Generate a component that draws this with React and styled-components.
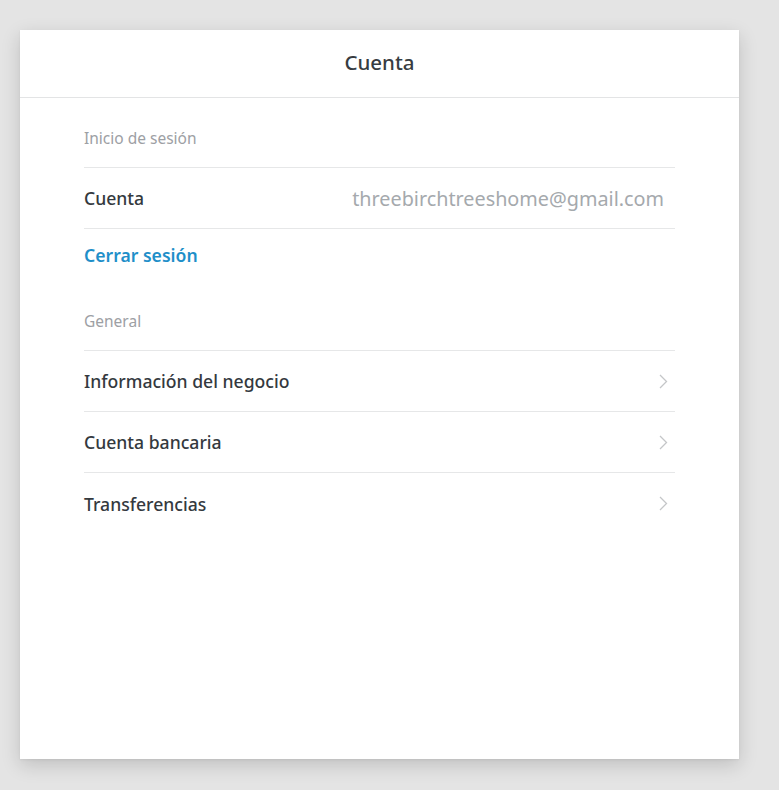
import React from 'react';
import styled, { createGlobalStyle } from 'styled-components';

const GlobalStyle = createGlobalStyle`
  html, body {
    margin: 0;
    padding: 0;
    background: #e4e4e4;
  }
  body {
    font-family: "Noto Sans", "Open Sans", sans-serif;
    -webkit-font-smoothing: antialiased;
  }
`;

const general = ['Información del negocio', 'Cuenta bancaria', 'Transferencias'];

const Chevron = () => (
  <svg width="9" height="15" viewBox="0 0 9 15" fill="none">
    <path d="M1 1l6.5 6.5L1 14" stroke="#c4c6c8" strokeWidth="1.3" />
  </svg>
);

const App = () => {
  return (
    <Page>
      <GlobalStyle />
      <Card>
        <Header>Cuenta</Header>
        <Body>
          <SectionTitle>Inicio de sesión</SectionTitle>
          <Row>
            <RowLabel>Cuenta</RowLabel>
            <RowValue>threebirchtreeshome@gmail.com</RowValue>
          </Row>
          <LinkRow>Cerrar sesión</LinkRow>

          <SectionTitle>General</SectionTitle>
          {general.map((item, i) => (
            <Row key={item} last={i === general.length - 1}>
              <RowLabel>{item}</RowLabel>
              <Chevron />
            </Row>
          ))}
        </Body>
      </Card>
    </Page>
  );
};

export default App;

const Page = styled.div`
  min-height: 790px;
  padding: 30px 40px 31px 20px;
  box-sizing: border-box;
`;

const Card = styled.div`
  width: 719px;
  height: 729px;
  background: #fff;
  box-shadow: 0 6px 18px rgba(0, 0, 0, 0.16), 0 1px 2px rgba(0, 0, 0, 0.06);
`;

const Header = styled.div`
  height: 68px;
  box-sizing: border-box;
  padding-bottom: 4px;
  display: flex;
  align-items: center;
  justify-content: center;
  border-bottom: 1px solid #e3e4e5;
  font-size: 20.5px;
  font-weight: 500;
  color: #373c41;
`;

const Body = styled.div`
  padding: 0 64px;
`;

const SectionTitle = styled.div`
  height: 70px;
  padding-top: 10px;
  box-sizing: border-box;
  display: flex;
  align-items: center;
  font-size: 15.5px;
  color: #9da0a4;
  border-bottom: 1px solid #e6e7e8;
`;

const Row = styled.div`
  height: 61px;
  box-sizing: border-box;
  display: flex;
  align-items: center;
  justify-content: space-between;
  padding-right: 7px;
  border-bottom: ${(p) => (p.last ? 'none' : '1px solid #e6e7e8')};
`;

const RowLabel = styled.span`
  font-size: 17.6px;
  font-weight: 500;
  color: #34393e;
`;

const RowValue = styled.span`
  font-size: 19.8px;
  color: #a5a9ad;
  margin-right: 4px;
`;

const LinkRow = styled.div`
  height: 52px;
  display: flex;
  align-items: center;
  font-size: 17.6px;
  font-weight: 600;
  color: #1f8fc9;
`;
